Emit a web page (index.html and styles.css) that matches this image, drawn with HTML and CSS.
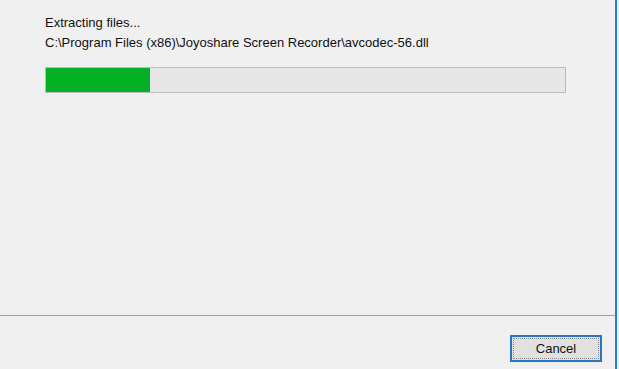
FILE: index.html
```html
<!DOCTYPE html>
<html>

<head>
    <meta charset="UTF-8">
    <title>Joyoshare Screen Recorder Setup</title>
    <link rel="stylesheet" href="styles.css">
</head>

<body>

    <div class="window">
        <div class="content">
            <p class="status">Extracting files...</p>
            <p class="status">C:\Program Files (x86)\Joyoshare Screen Recorder\avcodec-56.dll</p>

            <div class="progress">
                <div class="progress-fill" style="width: 20%"></div>
            </div>
        </div>

        <div class="footer">
            <button class="btn">Cancel</button>
        </div>
    </div>

</body>

</html>
```

FILE: styles.css
```css
/* Basic Reset */
* {
    box-sizing: border-box;
    margin: 0;
    padding: 0;
}

body {
    font-family: "Liberation Sans", Arial, sans-serif;
    font-size: 13px;
    background: #f0f0f0;
    color: #111;
    width: 619px;
    height: 369px;
    overflow: hidden;
}

.window {
    display: flex;
    flex-direction: column;
    width: 617px;
    height: 369px;
    border-right: 2px solid #2b7bd0;
}

.content {
    flex: 1;
    padding: 13px 0 0 45px;
}

.status {
    line-height: 20px;
    white-space: nowrap;
}

.progress {
    width: 521px;
    height: 26px;
    margin-top: 14px;
    background: #e6e6e6;
    border: 1px solid #bcbcbc;
}

.progress-fill {
    height: 100%;
    background: #06b025;
}

.footer {
    height: 54px;
    border-top: 1px solid #a0a0a0;
    display: flex;
    justify-content: flex-end;
    align-items: flex-start;
    padding: 19px 13px 0 0;
}

.btn {
    width: 92px;
    height: 27px;
    font-family: inherit;
    font-size: 13px;
    color: #111;
    background: #e1e1e1;
    border: 2px solid #2a74c4;
    outline: 1px dotted #8a8a8a;
    outline-offset: -4px;
}
```
